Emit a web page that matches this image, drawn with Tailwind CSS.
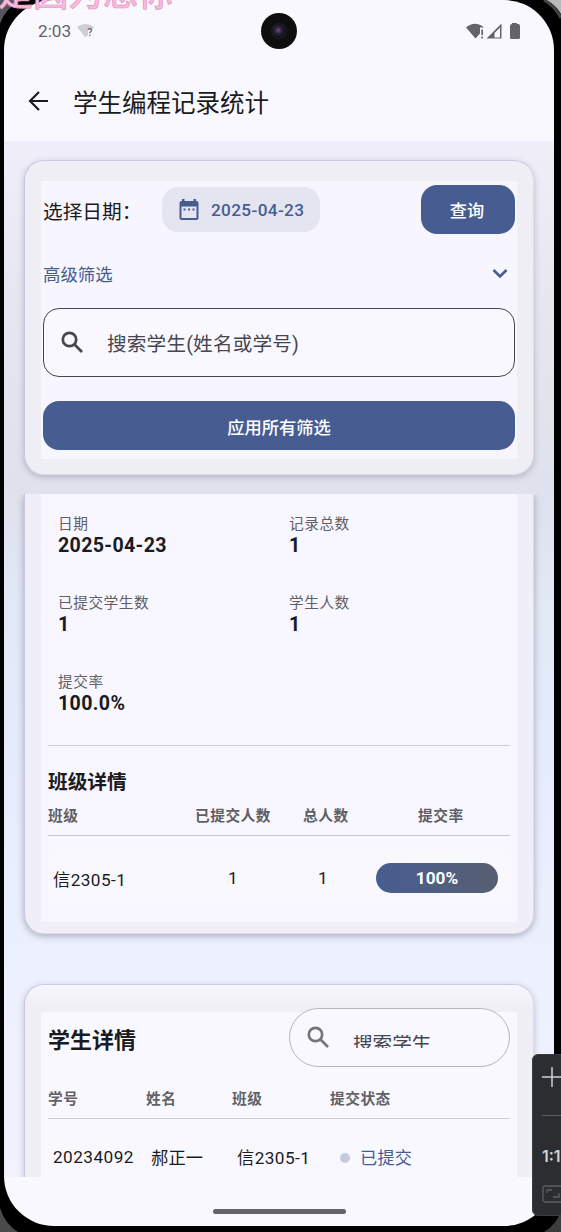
<!DOCTYPE html>
<html lang="zh-CN">
<head>
<meta charset="utf-8">
<title>学生编程记录统计</title>
<script src="https://cdn.jsdelivr.net/npm/@tailwindcss/browser@4"></script>
</head>
<body class="relative h-[1232px] w-[561px] overflow-hidden bg-black font-['Roboto','Noto_Sans_CJK_SC',sans-serif] text-[#1a1b20]">

<!-- device frame rim -->
<svg class="absolute inset-0" width="561" height="1232" fill="none">
  <path d="M0 0H24Q6 6 0 24Z" fill="#55575a"/>
  <path d="M546 0Q556 5 561 14V0Z" fill="#b9b9b9"/>
  <path d="M544 0Q555 6 561 18" stroke="#444" stroke-width="3"/>
  <path d="M0 1208Q5 1224 18 1232H0Z" fill="#4a4c4c"/>
  <path d="M561 1211Q556 1225 544 1232H561Z" fill="#3b3d3d"/>
</svg>

<main class="relative ml-1 flex h-[1226px] w-[550px] flex-col overflow-hidden rounded-[50px] bg-[#faf8ff]">
  <!-- status bar -->
  <header class="flex h-[62px] shrink-0 items-center pl-[34px] pr-[33px] text-[#646468]">
    <span class="mt-0.5 w-[39px] text-[17.200px] leading-none">2:03</span>
    <svg width="18" height="16" viewBox="0 0 18 16"><path d="M0 4Q8.500-2 17 4L15 6.500H11V12L8.500 14.500Z" fill="#cfcdd4"/><text x="10.500" y="13" font-size="10" font-weight="500" fill="#646468">?</text></svg>
    <div class="ml-[166px] size-9 rounded-full bg-[#0e0e0f] p-[10px]"><div class="size-4 rounded-full border border-[#222226] bg-[radial-gradient(circle_at_45%_45%,#6d5486_0,#2c2440_30%,#141319_60%)]"></div></div>
    <svg class="ml-auto" width="55" height="17" viewBox="0 0 55 17" fill="#646468">
      <path d="M0 4.500Q9-3 18 4.500H14V10.500L9.500 15.500Z"/><path d="M15.300 6.500H17V12H15.300ZM15.300 13.500H17V15.500H15.300Z"/>
      <path fill-rule="evenodd" d="M20.500 15.500L35.500 .5V15.500ZM28.500 14.500H34V4.500L28.500 10Z"/>
      <path d="M46 0H51V1H52Q54 1 54 3V14.500Q54 16 52.500 16H45.500Q44 16 44 14.500V3Q44 1 46 1Z"/>
    </svg>
  </header>
  <!-- app bar -->
  <div class="flex h-[79px] shrink-0 items-center pl-6">
    <svg class="-mt-px" width="21" height="20" viewBox="0 0 21 20" fill="none" stroke="#1a1b20" stroke-width="2.200"><path d="M20 10H2.500M11 1L2 10L11 19"/></svg>
    <h1 class="ml-6 mt-[5px] text-[24.500px] leading-none">学生编程记录统计</h1>
  </div>

  <div class="flex h-[1036px] shrink-0 flex-col bg-[linear-gradient(180deg,#f0eef9_0,#e5e6f0_170px,#dfe1ec_345px,#e3e8f6_460px,#e6ebfc_600px,#edf0fe_830px,#f2f2ff_1036px)]">
    <!-- filters -->
    <section class="h-[353px] shrink-0 pl-5 pt-[19px] pr-5">
      <div class="h-[315px] rounded-[20px] border border-[#dcdce6] border-l-[#c5cae0] border-t-[#c9cce1] bg-[#efeef4] pb-[15px] pl-4 pr-4 pt-5 shadow-[0_2px_6px_rgba(70,75,100,0.3)]">
        <div class="flex h-[278px] flex-col bg-[#f7f5fd] px-0.5 pt-1">
          <div class="flex items-center">
            <span class="mt-1.5 w-[119px] whitespace-nowrap text-[19.700px] leading-none">选择日期：</span>
            <div class="flex h-[45px] w-[158px] items-center rounded-2xl bg-[#e4e5f1] pl-[17px] text-[#475d92]">
              <svg width="20" height="22" viewBox="0 0 20 22" fill="#475d92"><path fill-rule="evenodd" d="M3 0H5.500V2H14.500V0H17V2H17.500Q19.500 2 19.500 4V19Q19.500 21 17.500 21H2.500Q.5 21 .5 19V4Q.5 2 2.500 2H3ZM2.500 7.500V19H17.500V7.500Z"/><path d="M4.500 9.500h2v2h-2zM9 9.500h2v2H9zM13.500 9.500h2v2h-2z"/></svg>
              <span class="ml-3 mt-0.5 text-[17.200px] font-medium leading-none tracking-[0.350px]">2025-04-23</span>
            </div>
            <button class="ml-auto h-[49px] w-[94px] rounded-2xl bg-[#475d92] pr-0.5 pt-1 text-[17.200px] font-medium leading-none text-white">查询</button>
          </div>
          <div class="flex h-[74px] items-center justify-between pr-[7px] pt-1.5">
            <span class="mt-1 text-[17.400px] leading-none text-[#475d92]">高级筛选</span>
            <svg width="16" height="10" viewBox="0 0 16 10" fill="none" stroke="#475d92" stroke-width="2.600"><path d="M1.500 1L8 7.500L14.500 1"/></svg>
          </div>
          <div class="flex h-[69px] items-center rounded-2xl border-[1.500px] border-[#45464f] bg-[#f9f8ff] pl-[17px]">
            <svg width="23" height="23" viewBox="0 0 23 23" fill="none" stroke="#45464f" stroke-width="2.700"><circle cx="8.500" cy="8.500" r="6.700"/><path d="M13.500 13.500L21 21"/></svg>
            <span class="ml-[23px] mt-[5px] text-[19.600px] leading-none tracking-[0.200px] text-[#45464f]">搜索学生(姓名或学号)</span>
          </div>
          <button class="mt-6 h-[49px] w-full rounded-2xl bg-[#475d92] pt-1.5 text-[17.300px] font-medium leading-none text-white">应用所有筛选</button>
        </div>
      </div>
    </section>

    <!-- scrolled results -->
    <div class="h-[683px] shrink-0 overflow-hidden px-5">
      <section class="h-[440px] rounded-b-[20px] border border-t-0 border-[#dcdce6] border-l-[#c5cae0] bg-[#f0eff8] pl-4 pr-4 shadow-[0_2px_7px_rgba(70,70,90,0.4)]">
        <div class="h-[428px] bg-[#f8f6ff] px-[7px] pt-[21px]">
          <dl class="grid h-[230px] grid-cols-2 auto-rows-[79px] text-[19.600px] font-bold leading-none tracking-[0.350px]">
            <div class="pl-2.5"><dt class="mb-0.5 text-[14.700px] font-normal leading-[19px] tracking-[0.500px] text-[#606064]">日期</dt><dd>2025-04-23</dd></div>
            <div class="pl-2.5"><dt class="mb-0.5 text-[14.700px] font-normal leading-[19px] tracking-[0.500px] text-[#606064]">记录总数</dt><dd>1</dd></div>
            <div class="pl-2.5"><dt class="mb-0.5 text-[14.700px] font-normal leading-[19px] tracking-[0.500px] text-[#606064]">已提交学生数</dt><dd>1</dd></div>
            <div class="pl-2.5"><dt class="mb-0.5 text-[14.700px] font-normal leading-[19px] tracking-[0.500px] text-[#606064]">学生人数</dt><dd>1</dd></div>
            <div class="pl-2.5"><dt class="mb-0.5 text-[14.700px] font-normal leading-[19px] tracking-[0.500px] text-[#606064]">提交率</dt><dd>100.0%</dd></div>
          </dl>
          <div class="border-t border-[#cdcdd9]"></div>
          <h2 class="mt-[27px] text-[19.700px] font-bold leading-5">班级详情</h2>
          <div class="mt-[13px] flex h-[30px] items-start border-b border-[#c8c8d5] text-[14.700px] font-bold leading-5 tracking-[0.500px] text-[#5e5e63]">
            <span class="w-[147px]">班级</span><span class="w-[108px]">已提交人数</span><span class="w-[115px]">总人数</span><span>提交率</span>
          </div>
          <div class="mt-[15px] flex h-[54px] items-center rounded-xl bg-[#f9f8ff] pl-[5px] text-[17.200px] leading-none">
            <span class="mt-1.5 w-[175px] tracking-[0.450px]">信2305-1</span><span class="mt-0.5 w-[90px]">1</span><span class="mt-0.5 w-[58px]">1</span>
            <span class="h-[30px] w-[122px] rounded-full bg-linear-to-r from-[#475d92] to-[#585e71] text-center font-bold leading-[30px] text-white">100%</span>
          </div>
        </div>
      </section>

      <section class="mt-[50px] h-[240px] rounded-[20px] border border-[#dcdce6] border-l-[#c5cae0] border-t-[#c9cce1] bg-[linear-gradient(180deg,#f8f7ff_0,#f0eff5_20px)] pl-4 pr-4 pt-[27px] shadow-[0_2px_6px_rgba(70,75,100,0.3)]">
        <div class="flex h-[220px] flex-col bg-[#f9f8ff] px-[7px]">
          <div class="-mt-1 flex h-[59px] shrink-0 items-center justify-between">
            <h2 class="mt-1.5 text-[22px] font-bold leading-none">学生详情</h2>
            <div class="flex h-[59px] w-[221px] items-center rounded-full border border-[#b4b4ba] bg-[#f9f8ff] pl-[17px]">
              <svg width="23" height="23" viewBox="0 0 23 23" fill="none" stroke="#747479" stroke-width="2.700"><circle cx="8.500" cy="8.500" r="6.700"/><path d="M13.500 13.500L21 21"/></svg>
              <span class="ml-[23px] mt-[7px] block h-[13px] overflow-hidden text-[19.600px] leading-[18px] text-[#45464f]">搜索学生</span>
            </div>
          </div>
          <div class="mt-[22px] flex h-[30px] shrink-0 items-start border-b border-[#cdcdd5] text-[14.700px] font-bold leading-5 tracking-[0.500px] text-[#616166]">
            <span class="w-[98px]">学号</span><span class="w-[86px]">姓名</span><span class="w-[98px]">班级</span><span>提交状态</span>
          </div>
          <div class="flex h-[77px] shrink-0 items-center pl-[5px] text-[17.200px] leading-none">
            <span class="w-[98px] tracking-[0.450px]">20234092</span><span class="mt-[3px] w-[86px] tracking-[0.200px]">郝正一</span><span class="mt-[3px] w-[103px] tracking-[0.450px]">信2305-1</span>
            <i class="mr-2.5 size-2.5 rounded-full bg-[#c5cae0]"></i><span class="mt-[3px] tracking-[0.200px] text-[#475d92]">已提交</span>
          </div>
        </div>
      </section>
    </div>
  </div>
  <div class="flex flex-1 justify-center pt-8"><div class="h-[5px] w-[133px] rounded-full bg-[#646468]"></div></div>
</main>

<!-- desktop lyric overlay -->
<div class="absolute left-[-2px] top-[-28px] whitespace-nowrap font-['Noto_Sans_CJK_SC',sans-serif] text-[35px] font-medium leading-[38px] text-[#fbb9e0] [-webkit-text-stroke:0.700px_#d997bb]">是因为想你</div>

<!-- emulator zoom toolbar -->
<aside class="absolute left-[532px] top-[1054px] flex h-[162px] w-10 flex-col rounded-md border border-[#3a3c40] bg-[#2b2d30] pl-[9px] pt-3 text-[#d2d3d6]">
  <svg width="21" height="20" viewBox="0 0 21 20" stroke="#ced0d6" stroke-width="1.500"><path d="M0 10H20M10 0V20"/></svg>
  <div class="mt-7 h-px w-7 bg-[#5a5c60]"></div>
  <span class="mt-8 font-['Inter',sans-serif] text-[16px] font-semibold leading-4">1:1</span>
  <svg class="mt-[21px] shrink-0" width="27" height="18" viewBox="0 0 27 18" fill="none" stroke="#5d5f63" stroke-width="1.300"><rect x="1" y="1" width="25" height="16" rx="2"/><path d="M5 8V5H10M17 8V12H11"/></svg>
</aside>
</body>
</html>
